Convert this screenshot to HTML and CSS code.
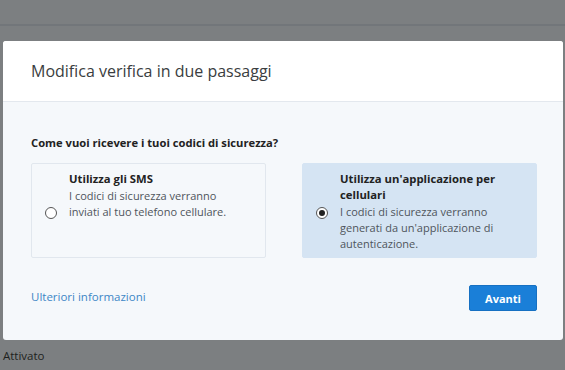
FILE: index.html
```html
<!DOCTYPE html>
<html lang="it">
<head>
  <meta charset="UTF-8" />
  <title>Verifica in due passaggi</title>
  <link rel="stylesheet" href="styles.css">
</head>
<body>
  <div class="topbar"></div>
  <div class="modal">
    <div class="modal-header">
      <h1 class="modal-title">Modifica verifica in due passaggi</h1>
    </div>
    <div class="modal-body">
      <p class="question">Come vuoi ricevere i tuoi codici di sicurezza?</p>
      <div class="options">
        <label class="option">
          <span class="radio"></span>
          <span class="option-text">
            <strong>Utilizza gli SMS</strong>
            I codici di sicurezza verranno inviati al tuo telefono cellulare.
          </span>
        </label>
        <label class="option selected">
          <span class="radio checked"></span>
          <span class="option-text">
            <strong>Utilizza un'applicazione per cellulari</strong>
            I codici di sicurezza verranno generati da un'applicazione di autenticazione.
          </span>
        </label>
      </div>
      <div class="modal-footer">
        <a class="more-link" href="#">Ulteriori informazioni</a>
        <button class="next-button">Avanti</button>
      </div>
    </div>
  </div>
  <p class="status">Attivato</p>
</body>
</html>
```

FILE: styles.css
```css
body {
  font-family: 'Open Sans', 'Noto Sans', sans-serif;
  margin: 0;
  padding: 0;
  background-color: #7c7f81;
  overflow: hidden;
}
.topbar {
  height: 24px;
  border-bottom: 2px solid #72767a;
  margin-bottom: 15px;
}
.modal {
  margin-left: 3px;
  width: 560px;
  background-color: #f5f8fb;
  border-radius: 3px;
  overflow: hidden;
}
.modal-header {
  background-color: white;
  height: 60px;
  border-bottom: 1px solid #e3e8ee;
  display: flex;
  align-items: center;
  padding-left: 28px;
}
.modal-title {
  font-size: 16px;
  font-weight: 400;
  color: #3a3d40;
  margin: 0;
  padding-bottom: 1px;
}
.modal-body {
  padding: 33px 26px 29px 28px;
}
.question {
  font-size: 11.2px;
  font-weight: 700;
  color: #222;
  margin: 0 0 13px;
}
.options {
  display: flex;
  gap: 36px;
}
.option {
  flex: 1;
  display: flex;
  align-items: flex-start;
  gap: 12px;
  height: 95px;
  box-sizing: border-box;
  padding: 7px 30px 0 13px;
  border: 1px solid #e1e7ee;
  border-radius: 2px;
  font-size: 11px;
  line-height: 16px;
  color: #4f555b;
}
.option.selected {
  background-color: #d5e4f3;
  border-color: #d5e4f3;
}
.option-text strong {
  display: block;
  color: #222;
  font-size: 11.3px;
  font-weight: 700;
  padding-bottom: 1px;
}
.radio {
  flex: none;
  align-self: center;
  margin-bottom: 2px;
  width: 12px;
  height: 12px;
  border: 1px solid #555;
  border-radius: 50%;
  box-sizing: border-box;
  background-color: white;
  position: relative;
}
.radio.checked::after {
  content: '';
  position: absolute;
  left: 2px;
  top: 2px;
  width: 6px;
  height: 6px;
  border-radius: 50%;
  background-color: #222;
}
.modal-footer {
  display: flex;
  justify-content: space-between;
  align-items: center;
  margin-top: 27px;
}
.more-link {
  color: #3d87c6;
  font-size: 11.5px;
  text-decoration: none;
  margin-bottom: 4px;
}
.next-button {
  font-family: inherit;
  background-color: #1a7fd8;
  color: white;
  font-size: 11px;
  font-weight: 700;
  width: 68px;
  height: 26px;
  border: 1px solid #1670c2;
  border-radius: 2px;
}
.status {
  font-size: 11.5px;
  color: #1e1f20;
  margin: 8px 0 0 3px;
}
```
